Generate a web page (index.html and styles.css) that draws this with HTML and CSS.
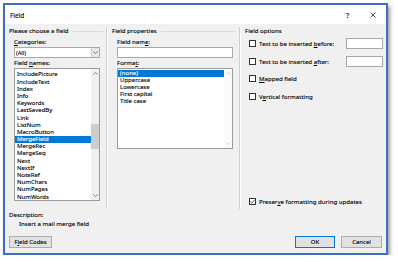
FILE: index.html
```html
<!DOCTYPE html>
<html>
<head>
<meta charset="utf-8">
<link rel="stylesheet" href="styles.css">
</head>
<body>
<div class="window">
  <div class="titlebar">
    <span class="title">Field</span>
    <span class="tb-buttons">
      <span class="help">?</span>
      <svg class="close" width="6" height="6" viewBox="0 0 6 6"><path d="M0.5 0.5L5.5 5.5M5.5 0.5L0.5 5.5" stroke="#222" stroke-width="0.8" fill="none"/></svg>
    </span>
  </div>
  <div class="body">
    <div class="columns">
      <section class="col col-choose">
        <div class="group-head"><span>Please choose a field</span><i class="rule"></i></div>
        <div class="group-content">
          <div class="label"><u>C</u>ategories:</div>
          <div class="combo">
            <span class="combo-text">(All)</span>
            <span class="combo-drop"><svg width="5" height="3" viewBox="0 0 5 3"><path d="M0.5 0.5L2.5 2.5L4.5 0.5" stroke="#555" stroke-width="0.8" fill="none"/></svg></span>
          </div>
          <div class="label">Field <u>n</u>ames:</div>
          <div class="listbox names">
            <div class="items">
              <div class="item">IncludePicture</div>
              <div class="item">IncludeText</div>
              <div class="item">Index</div>
              <div class="item">Info</div>
              <div class="item">Keywords</div>
              <div class="item">LastSavedBy</div>
              <div class="item">Link</div>
              <div class="item">ListNum</div>
              <div class="item">MacroButton</div>
              <div class="item selected">MergeField</div>
              <div class="item">MergeRec</div>
              <div class="item">MergeSeq</div>
              <div class="item">Next</div>
              <div class="item">NextIf</div>
              <div class="item">NoteRef</div>
              <div class="item">NumChars</div>
              <div class="item">NumPages</div>
              <div class="item">NumWords</div>
            </div>
            <div class="scrollbar">
              <svg class="arrow" width="5" height="3" viewBox="0 0 5 3"><path d="M0.5 2.5L2.5 0.5L4.5 2.5" stroke="#606060" stroke-width="0.8" fill="none"/></svg>
              <div class="track"><div class="thumb"></div></div>
              <svg class="arrow" width="5" height="3" viewBox="0 0 5 3"><path d="M0.5 0.5L2.5 2.5L4.5 0.5" stroke="#606060" stroke-width="0.8" fill="none"/></svg>
            </div>
          </div>
        </div>
      </section>
      <section class="col col-props">
        <div class="group-head"><span>Field properties</span><i class="rule"></i></div>
        <div class="group-content">
          <div class="label">Field nam<u>e</u>:</div>
          <div class="textbox wide"></div>
          <div class="label">Forma<u>t</u>:</div>
          <div class="listbox formats">
            <div class="items">
              <div class="item selected">(none)</div>
              <div class="item">Uppercase</div>
              <div class="item">Lowercase</div>
              <div class="item">First capital</div>
              <div class="item">Title case</div>
            </div>
            <div class="scrollbar disabled">
              <svg class="arrow" width="5" height="3" viewBox="0 0 5 3"><path d="M0.5 2.5L2.5 0.5L4.5 2.5" stroke="#c4c4c4" stroke-width="0.8" fill="none"/></svg>
              <div class="track"></div>
              <svg class="arrow" width="5" height="3" viewBox="0 0 5 3"><path d="M0.5 0.5L2.5 2.5L4.5 0.5" stroke="#c4c4c4" stroke-width="0.8" fill="none"/></svg>
            </div>
          </div>
        </div>
      </section>
      <section class="col col-options">
        <div class="group-head"><span>Field options</span></div>
        <div class="options">
          <div class="opt opt-1"><span class="check"></span><span class="opt-text">Text to be inserted <u>b</u>efore:</span><span class="textbox small"></span></div>
          <div class="opt opt-2"><span class="check"></span><span class="opt-text">Text to be inserted <u>a</u>fter:</span><span class="textbox small"></span></div>
          <div class="opt opt-3"><span class="check"></span><span class="opt-text"><u>M</u>apped field</span></div>
          <div class="opt opt-4"><span class="check"></span><span class="opt-text">V<u>e</u>rtical formatting</span></div>
          <div class="opt opt-last"><span class="check checked"><svg width="7" height="7" viewBox="0 0 7 7"><path d="M1.2 3.6L2.8 5.2L5.9 1.6" stroke="#333" stroke-width="0.8" fill="none"/></svg></span><span class="opt-text">Preser<u>v</u>e formatting during updates</span></div>
        </div>
      </section>
    </div>
    <div class="description">
      <div class="desc-label">Description:</div>
      <div class="desc-text">Insert a mail merge field</div>
    </div>
    <div class="buttons">
      <button class="btn codes">F<u>i</u>eld Codes</button>
      <span class="spacer"></span>
      <button class="btn ok">OK</button>
      <button class="btn cancel">Cancel</button>
    </div>
  </div>
</div>
</body>
</html>
```
FILE: styles.css
```css
* { box-sizing: border-box; }
html, body { margin: 0; padding: 0; background: #fff; }
body {
  font-family: "Noto Sans", "Open Sans", sans-serif;
  font-size: 6.1px;
  color: #000;
  -webkit-text-stroke: 0.12px #000;
}
u { text-decoration-thickness: 0.5px; text-underline-offset: 1px; }

.window {
  margin: 3px 0 0 3px;
  width: 385px;
  height: 252px;
  border: 2px solid #3f6dc4;
  box-shadow: 2px 3px 4px rgba(0,0,0,0.4);
  display: flex;
  flex-direction: column;
  background: #f0f0f0;
}

.titlebar {
  height: 19px;
  background: #fff;
  display: flex;
  align-items: center;
  padding: 1px 0 0 5px;
}
.title { font-size: 6.4px; }
.tb-buttons { margin-left: auto; display: flex; align-items: center; }
.help { font-size: 6.5px; margin-right: 21px; }
.close { margin-right: 10px; }

.body {
  flex: 1;
  display: flex;
  flex-direction: column;
  padding: 3px 3px 5px 4px;
}

.columns {
  display: flex;
  height: 182px;
}
.col { display: flex; flex-direction: column; }
.col-choose { width: 97px; }
.col-props {
  width: 133px;
  border-left: 1px solid #cfcfcf;
  box-shadow: inset 1px 0 0 #fff;
  padding-left: 5px;
}
.col-options {
  flex: 1;
  border-left: 1px solid #cfcfcf;
  box-shadow: inset 1px 0 0 #fff;
  padding-left: 5px;
}

.group-head {
  height: 8px;
  line-height: 8px;
  display: flex;
  align-items: center;
  white-space: nowrap;
}
.rule {
  flex: 1;
  height: 1px;
  background: #dcdcdc;
  margin: 0 3px 0 4px;
}

.group-content {
  padding-left: 5px;
  display: flex;
  flex-direction: column;
}
.col-choose .group-content { width: 91px; }
.col-props .group-content { width: 121px; }

.label {
  height: 8px;
  line-height: 8px;
  margin-top: 3px;
  white-space: nowrap;
}

.combo {
  height: 11px;
  margin-top: 1px;
  background: #fff;
  border: 1px solid #a8a8a8;
  display: flex;
  align-items: center;
}
.combo-text { padding-left: 1px; flex: 1; font-size: 5.7px; }
.combo-drop {
  width: 8px;
  height: 9px;
  background: #e8e8e8;
  border-left: 1px solid #d0d0d0;
  display: flex;
  align-items: center;
  justify-content: center;
}

.combo + .label { margin-top: 0; height: 9px; line-height: 10px; }

.textbox {
  background: #fff;
  border: 1px solid #a8a8a8;
  display: block;
}
.textbox.wide { height: 11px; margin-top: 1px; }
.textbox + .label { margin-top: 0; height: 9px; line-height: 9px; }

.listbox {
  background: #fff;
  border: 1px solid #9a9a9a;
  display: flex;
  margin-top: 1px;
}
.listbox.names { height: 133px; }
.listbox.formats { height: 81px; }

.items { flex: 1; overflow: hidden; }
.names .items { padding-top: 2.4px; }
.formats .items { padding-top: 0.6px; }
.item {
  height: 7.2px;
  line-height: 7.2px;
  padding-left: 2px;
  font-size: 6px;
  white-space: nowrap;
}
.item.selected { background: #0078d7; color: #fff; -webkit-text-stroke-color: #fff; }

.scrollbar {
  width: 8px;
  background: #f0f0f0;
  display: flex;
  flex-direction: column;
  align-items: center;
  padding: 3px 0;
}
.scrollbar.disabled { background: #fafafa; }
.arrow { flex: none; }
.track {
  flex: 1;
  width: 100%;
  padding-top: 49px;
}
.thumb {
  width: 100%;
  height: 25px;
  background: #cdcdcd;
}

.options {
  flex: 1;
  display: flex;
  flex-direction: column;
  padding-left: 4px;
}
.opt {
  height: 11px;
  display: flex;
  align-items: center;
  white-space: nowrap;
}
.opt-1 { margin-top: 3px; }
.opt-2 { margin-top: 7px; }
.opt-3 { margin-top: 6px; }
.opt-4 { margin-top: 6.5px; }
.opt-last { margin-top: auto; margin-bottom: 2px; }
.check {
  width: 7px;
  height: 7px;
  border: 1px solid #333;
  background: #fff;
  margin-right: 3px;
  flex: none;
  display: flex;
}
.check svg { margin: -1px; }
.textbox.small {
  width: 37px;
  height: 11px;
  margin-left: auto;
}

.description { margin-top: 2px; }
.desc-label { height: 8px; line-height: 8px; }
.desc-text { height: 9px; line-height: 9px; padding-left: 10px; }

.buttons {
  margin-top: 8px;
  display: flex;
  height: 12px;
  padding-right: 1px;
}
.spacer { flex: 1; }
.btn {
  font: inherit;
  font-size: 6px;
  color: #000;
  background: #e1e1e1;
  border: 1px solid #adadad;
  padding: 0;
  height: 12px;
  line-height: 10px;
  margin: 0;
}
.btn.codes { width: 43px; }
.btn.ok { width: 40px; border-color: #0078d7; margin-right: 6px; }
.btn.cancel { width: 41px; }
```
